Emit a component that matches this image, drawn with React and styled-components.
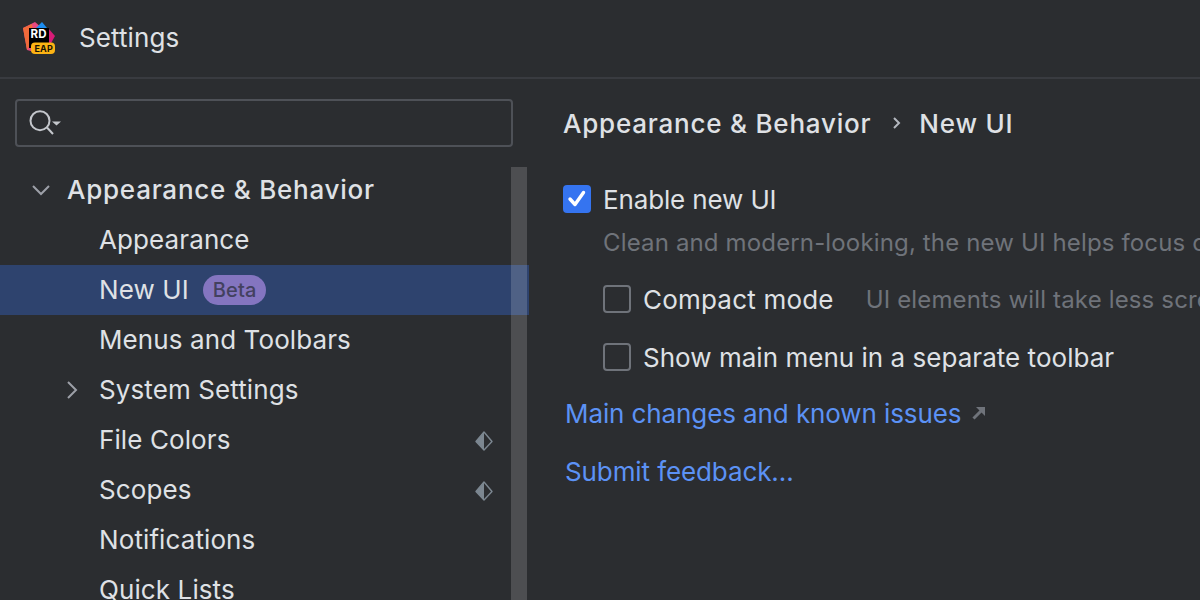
import React from "react";
import styled, { createGlobalStyle } from "styled-components";

const GlobalStyle = createGlobalStyle`
  html, body {
    margin: 0;
    padding: 0;
    background: #2b2d30;
    overflow: hidden;
  }
  body {
    font-family: Inter, "Liberation Sans", sans-serif;
  }
`;

const Window = styled.div`
  width: 1200px;
  height: 600px;
  display: flex;
  flex-direction: column;
  overflow: hidden;
  background: #2b2d30;
  color: #dfe1e5;
`;

const TitleBar = styled.header`
  height: 77px;
  flex: none;
  display: flex;
  align-items: center;
  gap: 23px;
  padding-left: 22px;
  border-bottom: 2px solid #393b40;
  font-size: 26px;
  letter-spacing: 0.1px;
  color: #dfe1e5;
`;

const TitleText = styled.span`
  margin-bottom: 2px;
`;

const Body = styled.div`
  flex: 1;
  display: flex;
  min-height: 0;
`;

const Sidebar = styled.aside`
  position: relative;
  width: 529px;
  flex: none;
  padding-top: 20px;
  overflow: hidden;
`;

const SearchBox = styled.div`
  width: 498px;
  height: 48px;
  margin-left: 15px;
  box-sizing: border-box;
  display: flex;
  align-items: center;
  padding-left: 12px;
  border: 2px solid #4e5157;
  border-radius: 4px;
`;

const Tree = styled.div`
  margin-top: 18px;
`;

const Row = styled.div`
  height: 50px;
  box-sizing: border-box;
  padding-bottom: 2px;
  display: flex;
  align-items: center;
  position: relative;
  padding-left: ${(p) => p.$indent}px;
  background: ${(p) => (p.$selected ? "#2e436e" : "transparent")};
  font-size: 26px;
  font-weight: ${(p) => (p.$group ? 500 : 400)};
  letter-spacing: ${(p) => (p.$group ? "0.76px" : "0.1px")};
  white-space: nowrap;
`;

const Chevron = styled.svg`
  position: absolute;
  left: ${(p) => p.$left}px;
  top: 13px;
  width: 24px;
  height: 24px;
  fill: none;
  stroke: #9da0a8;
  stroke-width: 2;
`;

const BetaBadge = styled.span`
  margin: 2px 0 0 14px;
  height: 30px;
  padding: 0 10px;
  display: inline-flex;
  align-items: center;
  border-radius: 15px;
  background: #8475c0;
  color: #43415f;
  font-size: 20px;
  font-weight: 500;
`;

const SharedIcon = styled.svg`
  position: absolute;
  left: 474px;
  top: 15px;
  width: 20px;
  height: 22px;
`;

const Scrollbar = styled.div`
  position: absolute;
  left: 511px;
  top: 88px;
  bottom: 0;
  width: 16px;
  background: rgba(255, 255, 255, 0.16);
`;

const Content = styled.main`
  flex: 1;
  min-width: 0;
  padding: 26px 0 0 34px;
  overflow: hidden;
`;

const Breadcrumbs = styled.div`
  height: 36px;
  display: flex;
  align-items: center;
  font-size: 26px;
  font-weight: 500;
  letter-spacing: 0.78px;
  white-space: nowrap;
`;

const CrumbSeparator = styled.svg`
  width: 16px;
  height: 16px;
  margin: 0 14px 0 18px;
  fill: none;
  stroke: #b4b8bf;
  stroke-width: 2;
`;

const OptionRow = styled.label`
  display: flex;
  align-items: center;
  height: 36px;
  margin-left: ${(p) => p.$indent || 0}px;
  margin-top: ${(p) => p.$top}px;
  font-size: 26px;
  letter-spacing: ${(p) => p.$spacing || 0}px;
  white-space: nowrap;
`;

const CheckBox = styled.span`
  width: 28px;
  height: 28px;
  box-sizing: border-box;
  flex: none;
  margin-right: 12px;
  display: flex;
  align-items: center;
  justify-content: center;
  border-radius: 4px;
  background: ${(p) => (p.$checked ? "#3574f0" : "transparent")};
  border: ${(p) => (p.$checked ? "none" : "2px solid #6f737a")};
`;

const Hint = styled.span`
  color: #6f737a;
  font-size: 24px;
  letter-spacing: 0.15px;
  margin-left: ${(p) => p.$left || 0}px;
`;

const HintRow = styled.div`
  height: 36px;
  margin: 7px 0 0 40px;
  display: flex;
  align-items: center;
  white-space: nowrap;
`;

const LinkRow = styled.div`
  height: 36px;
  margin: ${(p) => p.$top}px 0 0 2px;
  display: flex;
  align-items: center;
  gap: 11px;
  color: #5c92f5;
  font-size: 26px;
  letter-spacing: -0.1px;
  white-space: nowrap;
`;

function Logo() {
  return (
    <svg width="34" height="34" viewBox="0 0 34 34">
      <path d="M1 6 L13 0 L20 6 L16 31 L5 28 Z" fill="#e8487f" />
      <path d="M1 6 L10 2 L12 16 L5 28 Z" fill="#f06a3a" />
      <path d="M14 6 L20 0 L25 6 Z" fill="#1c8cf0" />
      <path d="M26 6 L33 14 L28 23 L24 23 Z" fill="#d81b77" />
      <rect x="7" y="6" width="20" height="20" fill="#000" />
      <rect x="9" y="20.5" width="24" height="11.5" rx="4" fill="#fcb314" />
      <text x="8.5" y="16" fill="#fff" fontSize="11.5" fontWeight="700" fontFamily="Inter, sans-serif">RD</text>
      <text x="12.5" y="29.5" fill="#1a1205" fontSize="9" fontWeight="700" fontFamily="Inter, sans-serif">EAP</text>
    </svg>
  );
}

function SearchIcon() {
  return (
    <svg width="32" height="28" viewBox="0 0 32 28" fill="none">
      <circle cx="11" cy="11.7" r="9.5" stroke="#c4c7cc" strokeWidth="2" />
      <path d="M18 18.5 L24 25" stroke="#c4c7cc" strokeWidth="2" />
      <path d="M23 12.5 L32 12.5 L27.5 16.5 Z" fill="#c4c7cc" />
    </svg>
  );
}

function Shared() {
  return (
    <SharedIcon viewBox="0 0 20 22">
      <path d="M10 2 L2 11.5 L10 20 Z" fill="#7c8791" />
      <path d="M10 2 L18 11.5 L10 20 L2 11.5 Z" fill="none" stroke="#7c8791" strokeWidth="1.4" strokeLinejoin="round" />
    </SharedIcon>
  );
}

function Check() {
  return (
    <svg width="20" height="20" viewBox="0 0 20 20" fill="none">
      <path d="M3 10 L8 15.5 L16.5 3.5" stroke="#fff" strokeWidth="3.4" strokeLinecap="round" strokeLinejoin="round" />
    </svg>
  );
}

export default function App() {
  return (
    <>
      <GlobalStyle />
      <Window>
        <TitleBar>
          <Logo />
          <TitleText>Settings</TitleText>
        </TitleBar>
        <Body>
          <Sidebar>
            <SearchBox>
              <SearchIcon />
            </SearchBox>
            <Tree>
              <Row $indent={67} $group>
                <Chevron $left={29} viewBox="0 0 24 24">
                  <path d="M4 8 L12 16 L20 8" />
                </Chevron>
                Appearance &amp; Behavior
              </Row>
              <Row $indent={99}>Appearance</Row>
              <Row $indent={99} $selected>
                New UI
                <BetaBadge>Beta</BetaBadge>
              </Row>
              <Row $indent={99}>Menus and Toolbars</Row>
              <Row $indent={99}>
                <Chevron $left={60} viewBox="0 0 24 24">
                  <path d="M8 4 L16 12 L8 20" />
                </Chevron>
                System Settings
              </Row>
              <Row $indent={99}>
                File Colors
                <Shared />
              </Row>
              <Row $indent={99}>
                Scopes
                <Shared />
              </Row>
              <Row $indent={99}>Notifications</Row>
              <Row $indent={99}>Quick Lists</Row>
            </Tree>
            <Scrollbar />
          </Sidebar>
          <Content>
            <Breadcrumbs>
              Appearance &amp; Behavior
              <CrumbSeparator viewBox="0 0 16 16">
                <path d="M5 3 L10 8 L5 13" />
              </CrumbSeparator>
              New UI
            </Breadcrumbs>
            <OptionRow $top={40} $spacing={-0.14}>
              <CheckBox $checked>
                <Check />
              </CheckBox>
              Enable new UI
            </OptionRow>
            <HintRow>
              <Hint>Clean and modern-looking, the new UI helps focus on your code</Hint>
            </HintRow>
            <OptionRow $indent={40} $top={21} $spacing={0.2}>
              <CheckBox />
              Compact mode
              <Hint $left={32}>UI elements will take less screen space</Hint>
            </OptionRow>
            <OptionRow $indent={40} $top={22} $spacing={0.03}>
              <CheckBox />
              Show main menu in a separate toolbar
            </OptionRow>
            <LinkRow $top={20}>
              Main changes and known issues
              <svg width="14" height="14" viewBox="0 0 14 14" fill="none">
                <path d="M1.5 12.5 L9 5" stroke="#6f737a" strokeWidth="3" />
                <path d="M4 1 L13 1 L13 10 Z" fill="#6f737a" />
              </svg>
            </LinkRow>
            <LinkRow $top={22}>Submit feedback...</LinkRow>
          </Content>
        </Body>
      </Window>
    </>
  );
}
